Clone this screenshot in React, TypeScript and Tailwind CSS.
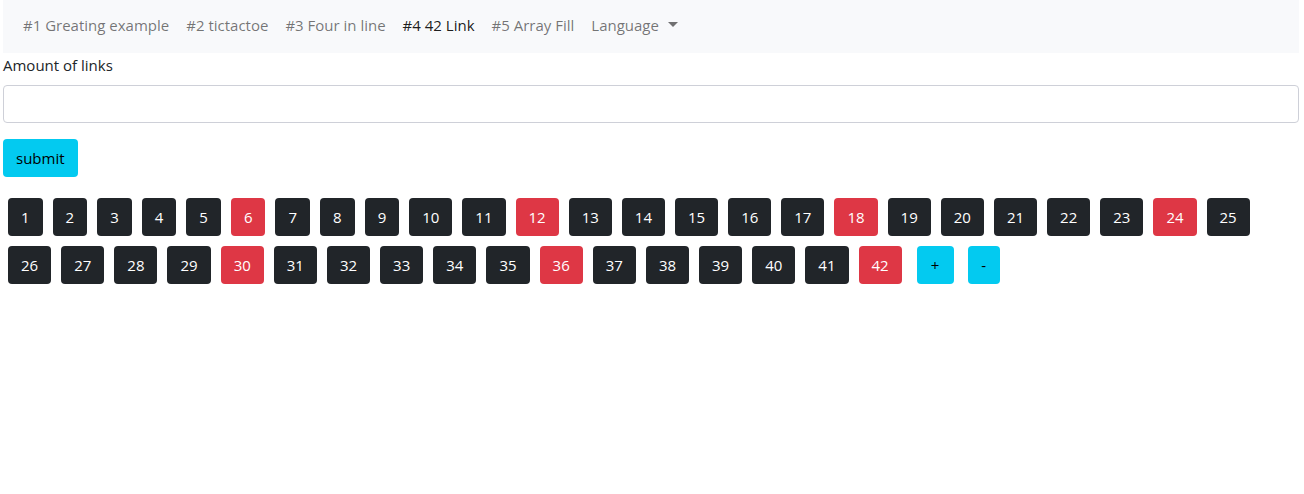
import { useState } from "react";
import type { FormEvent } from "react";
import clsx from "clsx";

const pages = [
  "#1 Greating example",
  "#2 tictactoe",
  "#3 Four in line",
  "#4 42 Link",
  "#5 Array Fill",
];
const activePage = 3;
const languages = ["English", "Nederlands"];

const buttonBase = "h-[38px] cursor-pointer rounded px-[13px] leading-6";

function LanguageMenu() {
  const [open, setOpen] = useState(false);
  return (
    <div className="relative">
      <button
        type="button"
        aria-haspopup="menu"
        aria-expanded={open}
        onClick={() => setOpen(!open)}
        className="flex cursor-pointer items-center gap-[9px] px-2 py-2 text-black/55"
      >
        Language
        <svg width="10" height="5" viewBox="0 0 10 5" className="mb-0.5" aria-hidden="true">
          <path d="M0 0h10L5 5z" fill="currentColor" />
        </svg>
      </button>
      {open && (
        <ul role="menu" className="absolute left-0 top-full z-10 rounded border border-black/15 bg-white py-2">
          {languages.map((name) => (
            <li key={name} role="none">
              <button
                type="button"
                role="menuitem"
                onClick={() => setOpen(false)}
                className="w-full cursor-pointer px-4 py-1 text-left hover:bg-[#e9ecef]"
              >
                {name}
              </button>
            </li>
          ))}
        </ul>
      )}
    </div>
  );
}

export default function App() {
  const [count, setCount] = useState(42);
  const [amount, setAmount] = useState("");

  const submit = (event: FormEvent) => {
    event.preventDefault();
    const value = Number.parseInt(amount, 10);
    if (value >= 0) setCount(value);
  };

  return (
    <div className="pl-[3px] pr-[5px] font-['Open_Sans','Noto_Sans',sans-serif] text-[15px] leading-6 text-[#212529]">
      <nav className="flex flex-wrap items-center gap-x-px bg-[#f8f9fb] px-3 pb-2 pt-[5px]">
        {pages.map((name, index) => (
          <a
            key={name}
            href="#"
            aria-current={index === activePage ? "page" : undefined}
            className={clsx("px-2 py-2", index === activePage ? "text-black/90" : "text-black/55")}
          >
            {name}
          </a>
        ))}
        <LanguageMenu />
      </nav>

      <main>
        <form onSubmit={submit} className="flex flex-col items-start">
          <label htmlFor="amount" className="mb-2">
            Amount of links
          </label>
          <input
            id="amount"
            type="text"
            inputMode="numeric"
            value={amount}
            onChange={(event) => setAmount(event.target.value)}
            className="mb-4 h-[38px] w-full rounded border border-[#ced0d8] bg-white px-3"
          />
          <button type="submit" className={clsx(buttonBase, "bg-[#03caf0] text-black")}>
            submit
          </button>
        </form>

        <div className="mt-4 flex flex-wrap gap-[10px] p-[5px]">
          {Array.from({ length: count }, (_, index) => index + 1).map((link) => (
            <button
              key={link}
              type="button"
              className={clsx(buttonBase, "text-white", link % 6 === 0 ? "bg-[#de3745]" : "bg-[#212529]")}
            >
              {link}
            </button>
          ))}
          <div className="flex gap-[14px] pl-[5px]">
            <button
              type="button"
              aria-label="+"
              onClick={() => setCount(count + 1)}
              className={clsx(buttonBase, "min-w-[37px] bg-[#03caf0] text-black")}
            >
              +
            </button>
            <button
              type="button"
              aria-label="-"
              onClick={() => setCount(Math.max(0, count - 1))}
              className={clsx(buttonBase, "min-w-8 bg-[#03caf0] text-black")}
            >
              -
            </button>
          </div>
        </div>
      </main>
    </div>
  );
}
